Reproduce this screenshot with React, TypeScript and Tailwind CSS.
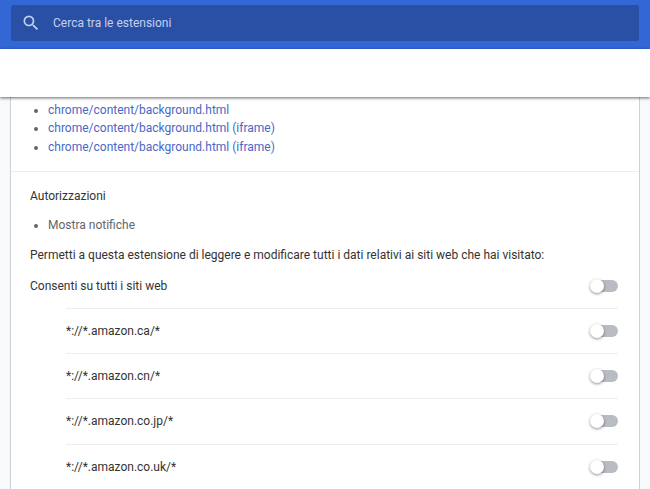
const hosts = ['*://*.amazon.ca/*', '*://*.amazon.cn/*', '*://*.amazon.co.jp/*', '*://*.amazon.co.uk/*'];

const views = [
  'chrome/content/background.html',
  'chrome/content/background.html (iframe)',
  'chrome/content/background.html (iframe)',
];

function Toggle() {
  return (
    <div className="relative h-[12px] w-[26px] shrink-0 rounded-full bg-[#b9bcc2]">
      <div className="absolute left-[-2px] top-[-1px] h-[14px] w-[14px] rounded-full bg-white shadow-[0_1px_3px_rgba(0,0,0,0.45)]" />
    </div>
  );
}

export default function App() {
  return (
    <div className="flex h-[489px] w-[650px] flex-col overflow-hidden bg-[#f8f9fa] font-['Roboto',sans-serif] text-[12px] text-[#333]">
      {/* Header */}
      <div className="flex h-[49px] shrink-0 flex-col bg-[#3367d6] px-[11px] pt-[5px]">
        <div className="flex h-[36px] items-center rounded-[2px] bg-[#2a50a6]">
          <svg className="ml-[10px] h-[20px] w-[20px] text-[#c3d0ee]" viewBox="0 0 24 24" fill="currentColor">
            <path d="M15.5 14h-.79l-.28-.27A6.471 6.471 0 0 0 16 9.5 6.5 6.5 0 1 0 9.5 16c1.61 0 3.09-.59 4.23-1.57l.27.28v.79l5 4.99L20.49 19l-4.99-5zm-6 0C7.01 14 5 11.99 5 9.5S7.01 5 9.5 5 14 7.01 14 9.5 11.99 14 9.5 14z" />
          </svg>
          <span className="ml-[12px] text-[#c3d0ee]">Cerca tra le estensioni</span>
        </div>
      </div>

      {/* Toolbar */}
      <div className="relative z-10 h-[48px] shrink-0 bg-white shadow-[0_1px_3px_rgba(0,0,0,0.6)]" />

      {/* Card */}
      <div className="mx-[10px] flex-1 border-x border-[#d0d1d3] bg-white">
        <ul className="list-disc border-b border-[#eeeeee] pb-[14.5px] pl-[37px] pt-[3.5px] text-[#4a67c6] marker:text-[#666]">
          {views.map((view, i) => (
            <li key={i} className="h-[18.5px] leading-[18.5px]">
              {view}
            </li>
          ))}
        </ul>

        <div className="pl-[19px] pr-[21px]">
          <p className="mt-[16px] leading-[16px]">Autorizzazioni</p>
          <ul className="mt-[13px] list-disc pl-[18px] text-[#666] marker:text-[#666]">
            <li className="leading-[16px]">Mostra notifiche</li>
          </ul>
          <p className="mt-[14px] leading-[16px]">
            Permetti a questa estensione di leggere e modificare tutti i dati relativi ai siti web che hai visitato:
          </p>

          <div className="mt-[15px] flex h-[16px] items-center justify-between">
            <span>Consenti su tutti i siti web</span>
            <Toggle />
          </div>

          <div className="mt-[14px] pl-[36px]">
            {hosts.map(host => (
              <div key={host} className="flex h-[45.4px] items-center justify-between border-t border-[#eeeeee]">
                <span>{host}</span>
                <Toggle />
              </div>
            ))}
          </div>
        </div>
      </div>
    </div>
  );
}
